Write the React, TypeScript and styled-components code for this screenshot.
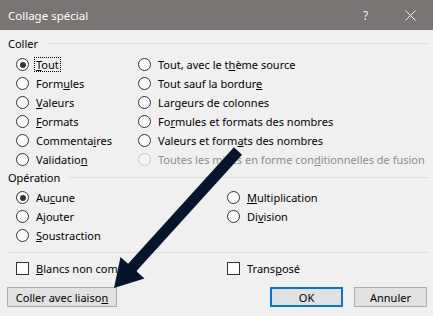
import React from 'react';
import styled, { createGlobalStyle } from 'styled-components';

const Global = createGlobalStyle`
  html, body { margin: 0; padding: 0; background: #f0f0f0; }
  body { font-family: "Noto Sans", "Segoe UI", sans-serif; font-size: 11px; color: #000; }
  * { box-sizing: border-box; }
`;

const Dialog = styled.div`
  position: relative;
  width: 433px;
  height: 316px;
  background: #f0f0f0;
  overflow: hidden;
  display: flex;
  flex-direction: column;
`;

const TitleBar = styled.div`
  height: 30px;
  flex-shrink: 0;
  background: #7a7573;
  color: #ffffff;
  display: flex;
  align-items: center;
`;

const Title = styled.div`
  flex: 1;
  padding-left: 8px;
  font-size: 11.5px;
`;

const TitleButton = styled.div`
  width: 45px;
  height: 30px;
  display: flex;
  align-items: center;
  justify-content: center;
  font-size: 12px;
  color: #f4f4f4;
`;

const Body = styled.div`
  padding: 5px 5px 0 7px;
  display: flex;
  flex-direction: column;
`;

const GroupHeader = styled.div`
  height: 16px;
  display: flex;
  align-items: center;
  gap: 9px;
  padding-left: 1px;
`;

const HeaderLine = styled.div`
  flex: 1;
  height: 1px;
  background: #dcdcdc;
`;

const OptionGrid = styled.div<{ $col: number; $top: number }>`
  display: grid;
  grid-template-columns: ${(p) => p.$col}px 1fr;
  grid-auto-rows: 19px;
  padding-left: 9px;
  margin-top: ${(p) => p.$top}px;
`;

const Option = styled.div`
  display: flex;
  align-items: center;
  white-space: nowrap;
`;

const RadioCircle = styled.span<{ $disabled?: boolean }>`
  width: 13px;
  height: 13px;
  flex-shrink: 0;
  border-radius: 50%;
  border: 1px solid ${(p) => (p.$disabled ? '#c4c4c4' : '#333333')};
  background: ${(p) => (p.$disabled ? '#f4f4f4' : '#ffffff')};
  display: flex;
  align-items: center;
  justify-content: center;
`;

const RadioDot = styled.span`
  width: 6px;
  height: 6px;
  border-radius: 50%;
  background: #333333;
`;

const CheckBox = styled.span`
  width: 13px;
  height: 13px;
  flex-shrink: 0;
  border: 1px solid #333333;
  background: #ffffff;
`;

const OptionLabel = styled.span<{ $disabled?: boolean; $focused?: boolean }>`
  margin-left: 5px;
  padding: 0 1px;
  line-height: 13px;
  border: 1px dotted ${(p) => (p.$focused ? '#000000' : 'transparent')};
  color: ${(p) => (p.$disabled ? '#8d8d8d' : '#000000')};
`;

const Separator = styled.div`
  height: 1px;
  background: #dcdcdc;
  margin-top: 7px;
`;

const ButtonRow = styled.div`
  display: flex;
  align-items: center;
  margin-top: 9px;
  padding-right: 1px;
  gap: 11px;
`;

const Spacer = styled.div`
  flex: 1;
`;

const Button = styled.button<{ $w: number; $default?: boolean }>`
  width: ${(p) => p.$w}px;
  height: 20px;
  padding: 0;
  margin: 0;
  background: #e1e1e1;
  border: ${(p) => (p.$default ? '2px solid #0078d7' : '1px solid #adadad')};
  font-family: "Noto Sans", "Segoe UI", sans-serif;
  font-size: 11px;
  color: #000;
  display: flex;
  align-items: center;
  justify-content: center;
`;

const ArrowLayer = styled.svg`
  position: absolute;
  left: 0;
  top: 0;
  pointer-events: none;
`;

const Key: React.FC<{ text: string; k: number }> = ({ text, k }) => (
  <>
    {text.slice(0, k)}
    <u>{text.charAt(k)}</u>
    {text.slice(k + 1)}
  </>
);

type Opt = { text: string; k: number; checked?: boolean; disabled?: boolean; focused?: boolean } | null;

const Radio: React.FC<{ o: Opt }> = ({ o }) => {
  if (!o) return <Option />;
  return (
    <Option>
      <RadioCircle $disabled={o.disabled}>{o.checked && <RadioDot />}</RadioCircle>
      <OptionLabel $disabled={o.disabled} $focused={o.focused}>
        <Key text={o.text} k={o.k} />
      </OptionLabel>
    </Option>
  );
};

const Check: React.FC<{ text: string; k: number }> = ({ text, k }) => (
  <Option>
    <CheckBox />
    <OptionLabel>
      <Key text={text} k={k} />
    </OptionLabel>
  </Option>
);

const coller: Opt[] = [
  { text: 'Tout', k: 0, checked: true, focused: true },
  { text: 'Tout, avec le thème source', k: 15 },
  { text: 'Formules', k: 4 },
  { text: 'Tout sauf la bordure', k: 19 },
  { text: 'Valeurs', k: 0 },
  { text: 'Largeurs de colonnes', k: 3 },
  { text: 'Formats', k: 0 },
  { text: 'Formules et formats des nombres', k: 2 },
  { text: 'Commentaires', k: 8 },
  { text: 'Valeurs et formats des nombres', k: 15 },
  { text: 'Validation', k: 9 },
  { text: 'Toutes les mises en forme conditionnelles de fusion', k: 29, disabled: true },
];

const operation: Opt[] = [
  { text: 'Aucune', k: 2, checked: true },
  { text: 'Multiplication', k: 0 },
  { text: 'Ajouter', k: 1 },
  { text: 'Division', k: 2 },
  { text: 'Soustraction', k: 0 },
  null,
];

export default function App() {
  return (
    <>
      <Global />
      <Dialog>
        <TitleBar>
          <Title>Collage spécial</Title>
          <TitleButton>?</TitleButton>
          <TitleButton>
            <svg width="11" height="11" viewBox="0 0 11 11">
              <path d="M0.5 0.5 L10.5 10.5 M10.5 0.5 L0.5 10.5" stroke="#f4f4f4" strokeWidth="1" fill="none" />
            </svg>
          </TitleButton>
        </TitleBar>
        <Body>
          <GroupHeader>
            <span>Coller</span>
            <HeaderLine />
          </GroupHeader>
          <OptionGrid $col={122} $top={4}>
            {coller.map((o, i) => (
              <Radio key={i} o={o} />
            ))}
          </OptionGrid>
          <GroupHeader>
            <span>Opération</span>
            <HeaderLine />
          </GroupHeader>
          <OptionGrid $col={211} $top={3}>
            {operation.map((o, i) => (
              <Radio key={i} o={o} />
            ))}
          </OptionGrid>
          <Separator />
          <OptionGrid $col={211} $top={6}>
            <Check text="Blancs non compris" k={0} />
            <Check text="Transposé" k={5} />
          </OptionGrid>
          <ButtonRow>
            <Button $w={110}>
              <Key text="Coller avec liaison" k={18} />
            </Button>
            <Spacer />
            <Button $w={73} $default>
              OK
            </Button>
            <Button $w={73}>Annuler</Button>
          </ButtonRow>
        </Body>
        <ArrowLayer width="433" height="316" viewBox="0 0 433 316">
          <line x1="238" y1="151" x2="129" y2="271" stroke="#06152b" strokeWidth="11" />
          <polygon points="114,288 120.5,257 144.5,278.5" fill="#06152b" />
        </ArrowLayer>
      </Dialog>
    </>
  );
}
